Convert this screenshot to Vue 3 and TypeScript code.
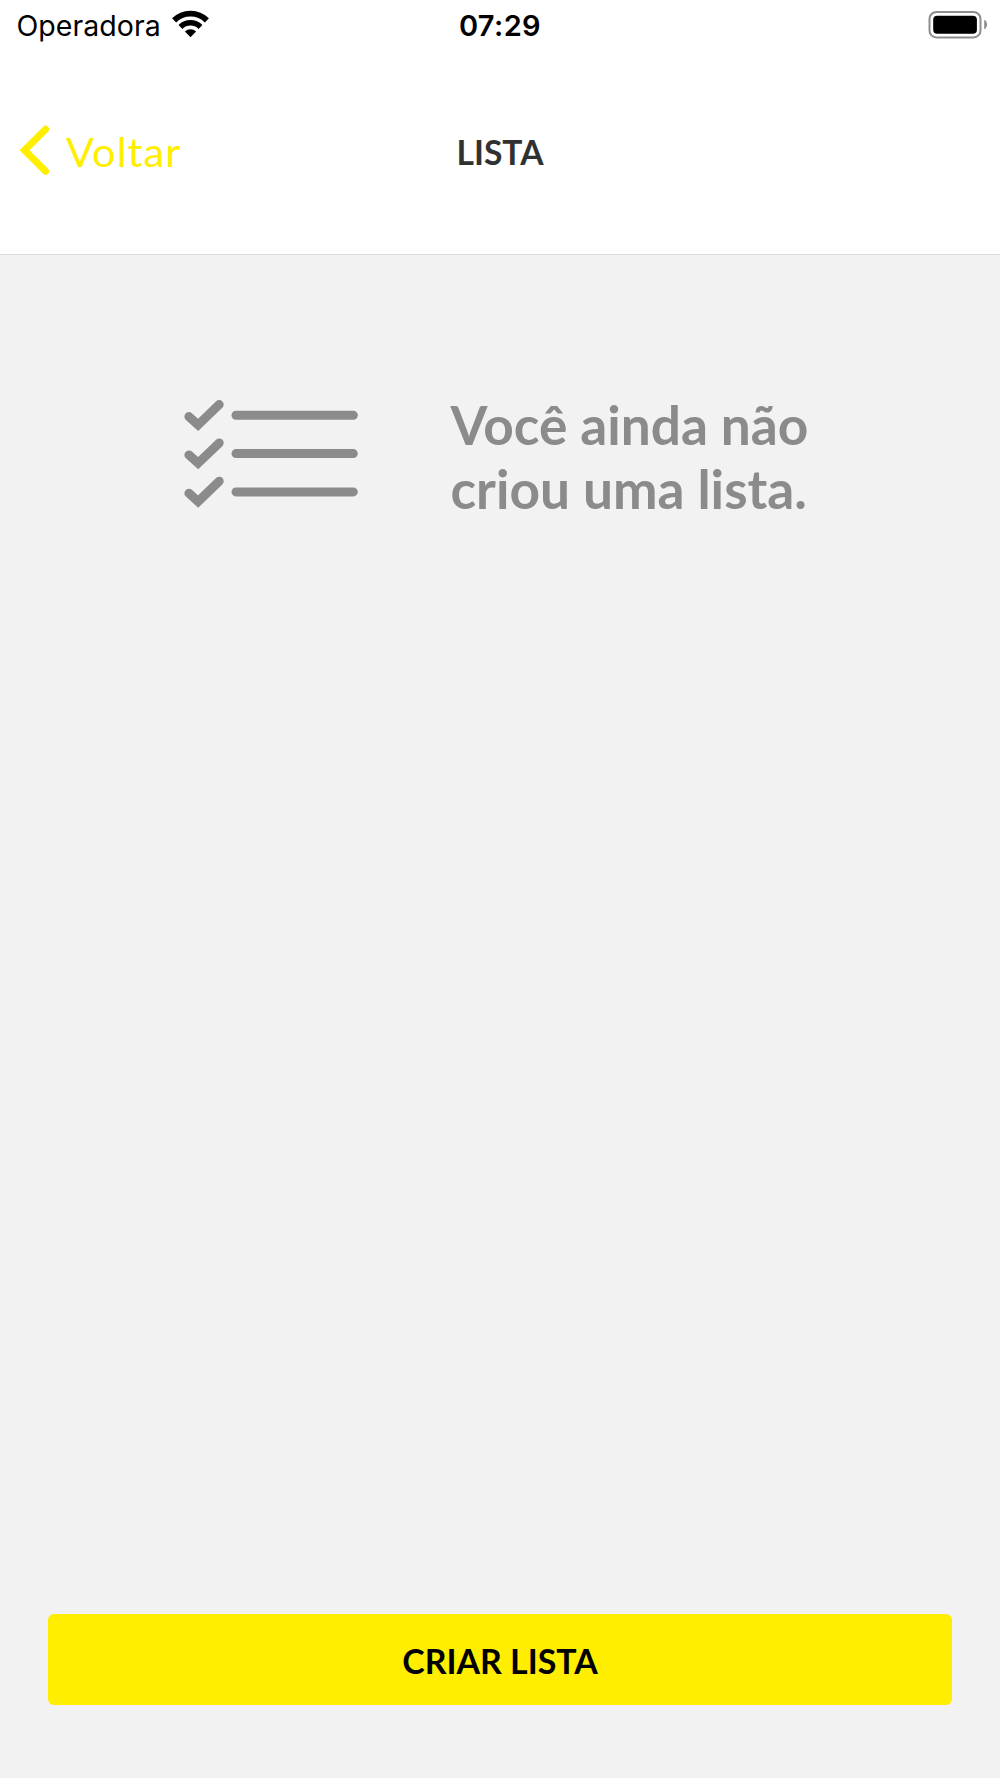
<script setup lang="ts">
const carrier = 'Operadora'
const time = '07:29'
const messageLines: string[] = ['Você ainda não', 'criou uma lista.']
const rowOffsets: number[] = [0, 38.3, 76.6]
</script>

<template>
  <main class="screen">
    <div class="status-bar">
      <div class="carrier">
        <span class="carrier-name">{{ carrier }}</span>
        <svg class="wifi" width="37" height="28" viewBox="0 0 37 28" fill="none" stroke="#000">
          <path d="M2.1 10.4A23.2 23.2 0 0 1 34.9 10.4" stroke-width="5.8" />
          <path d="M8.5 16.9A14.2 14.2 0 0 1 28.5 16.9" stroke-width="5.6" />
          <path d="M12.9 21.5A8 8 0 0 1 24.1 21.5L18.5 27.2Z" fill="#000" stroke="none" />
        </svg>
      </div>
      <span class="time">{{ time }}</span>
      <svg class="battery" width="60" height="28" viewBox="0 0 60 28">
        <rect x="1.5" y="1" width="51" height="25.4" rx="7" fill="none" stroke="#8e8e8e" stroke-width="2" />
        <rect x="5.2" y="4.7" width="43.7" height="18" rx="4" fill="#000" />
        <path d="M56.2 8.8C60 10.6 60 16.6 56.2 18.4Z" fill="#8e8e8e" />
      </svg>
    </div>

    <header class="nav-bar">
      <button class="back" type="button">
        <svg class="chevron" width="31" height="52" viewBox="0 0 31 52" fill="none">
          <path d="M26.6 4.2L5.6 25.2L26.6 46.2" stroke="#ffee00" stroke-width="7" stroke-linecap="round" />
        </svg>
        <span class="back-label">Voltar</span>
      </button>
      <h1 class="title">LISTA</h1>
    </header>

    <section class="content">
      <div class="empty-state">
        <svg class="checklist" width="176" height="110" viewBox="0 0 176 110" fill="none" stroke="#8b8b8b" stroke-linecap="round">
          <g v-for="offset in rowOffsets" :key="offset" :transform="`translate(0 ${offset})`">
            <path d="M4.9 16.6L14.1 24.9L35.2 4.6" stroke-width="9" />
            <path d="M52 15.3H169.3" stroke-width="9" />
          </g>
        </svg>
        <p class="message">
          <span v-for="line in messageLines" :key="line" class="message-line">{{ line }}</span>
        </p>
      </div>
      <button class="create" type="button">CRIAR LISTA</button>
    </section>
  </main>
</template>

<style>
body {
  margin: 0;
}
</style>

<style scoped>
.screen {
  display: flex;
  flex-direction: column;
  width: 1000px;
  height: 1778px;
  overflow: hidden;
  background: #fff;
  font-family: Lato, "Liberation Sans", sans-serif;
}

button {
  padding: 0;
  border: 0;
  background: none;
  font-family: inherit;
}

.status-bar {
  display: grid;
  grid-template-columns: 1fr auto 1fr;
  align-items: center;
  height: 50px;
  padding: 1px 12px 0;
  box-sizing: border-box;
  color: #000;
  font-family: Inter, "Liberation Sans", sans-serif;
  font-size: 29px;
  line-height: 49px;
}

.carrier {
  display: flex;
  align-items: center;
  padding-left: 4.5px;
}

.carrier-name {
  font-size: 28.5px;
  letter-spacing: 0.05px;
}

.wifi {
  margin: 0 0 3px 11px;
}

.time {
  font-weight: 600;
  letter-spacing: 0.4px;
}

.battery {
  justify-self: end;
  margin-bottom: 2px;
}

.nav-bar {
  display: grid;
  grid-template-columns: 1fr auto 1fr;
  align-items: center;
  height: 205px;
  box-sizing: border-box;
  padding-bottom: 1px;
  border-bottom: 1px solid #dcdcdc;
}

.back {
  display: flex;
  align-items: center;
  padding: 0 0 2px 19px;
  color: #ffee00;
}

.back-label {
  margin-left: 16px;
  font-size: 41.5px;
  line-height: 52px;
  letter-spacing: 1.1px;
}

.title {
  margin: 0;
  color: #303232;
  font-size: 33.6px;
  font-weight: 700;
  line-height: 42px;
}

.content {
  display: flex;
  flex: 1;
  flex-direction: column;
  justify-content: space-between;
  padding: 137px 48.4px 73px;
  background: #f2f2f2;
}

.empty-state {
  display: flex;
  align-items: flex-start;
  padding-left: 135.6px;
}

.checklist {
  margin-top: 8px;
}

.message {
  margin: 0 0 0 90.5px;
  color: #8b8b8b;
  font-size: 53.2px;
  font-weight: 700;
  line-height: 64px;
}

.message-line {
  display: block;
  white-space: nowrap;
}

.create {
  height: 91.5px;
  padding-top: 3px;
  border-radius: 6px;
  background: #ffee00;
  color: #000;
  font-size: 33.9px;
  font-weight: 700;
  line-height: 42px;
}
</style>
